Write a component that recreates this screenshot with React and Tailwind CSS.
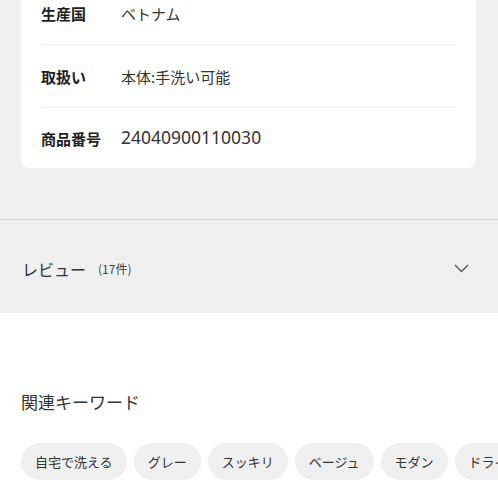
import React from "react";

const rows = [
  { label: "生産国", value: "ベトナム" },
  { label: "取扱い", value: "本体:手洗い可能" },
  { label: "商品番号", value: "24040900110030", num: true },
];

const chips = ["自宅で洗える", "グレー", "スッキリ", "ベージュ", "モダン", "ドライ"];

export default function App() {
  return (
    <div
      className="w-[498px] h-[498px] overflow-hidden bg-white text-[#333]"
      style={{ fontFamily: '"Noto Sans CJK JP", "Noto Sans", sans-serif' }}
    >
      <div className="bg-[#efefef] pl-[21px] pr-[22px] pb-[51px] border-b border-[#d9d9d9]">
        <div className="-mt-[18px] bg-white rounded-[8px] px-[20px]">
          {rows.map((r, i) => (
            <div
              key={r.label}
              className={
                "flex items-center " +
                (i < rows.length - 1 ? "h-[63px] border-b border-[#efefef]" : "h-[60px]")
              }
            >
              <div className="w-[80px] shrink-0 text-[15px] font-bold text-[#222] leading-none">
                {r.label}
              </div>
              {r.num ? (
                <div
                  className="text-[17.5px] leading-none text-[#333]"
                  style={{ fontFamily: '"Noto Sans", sans-serif' }}
                >
                  {r.value}
                </div>
              ) : (
                <div className="text-[15px] leading-none text-[#333]">{r.value}</div>
              )}
            </div>
          ))}
        </div>
      </div>

      <div className="bg-[#efefef] h-[93px] flex items-center pt-[4px] pl-[22px] pr-[29px]">
        <span className="text-[16px] leading-none text-[#333]">レビュー</span>
        <span className="ml-[12px] text-[12px] leading-none text-[#444]">(17件)</span>
        <svg className="ml-auto" width="15" height="9" viewBox="0 0 15 9" fill="none">
          <path d="M1 1 L7.5 7.5 L14 1" stroke="#555" strokeWidth="1.4" />
        </svg>
      </div>

      <div className="pt-[77px] pl-[21px]">
        <h2 className="text-[17px] leading-[24px] font-normal text-[#333]">関連キーワード</h2>
        <div className="mt-[29px] flex gap-[7px] whitespace-nowrap">
          {chips.map((c) => (
            <div
              key={c}
              className="shrink-0 h-[37px] px-[14px] rounded-full bg-[#efefef] flex items-center text-[13px] text-[#333]"
            >
              {c}
            </div>
          ))}
        </div>
      </div>
    </div>
  );
}
